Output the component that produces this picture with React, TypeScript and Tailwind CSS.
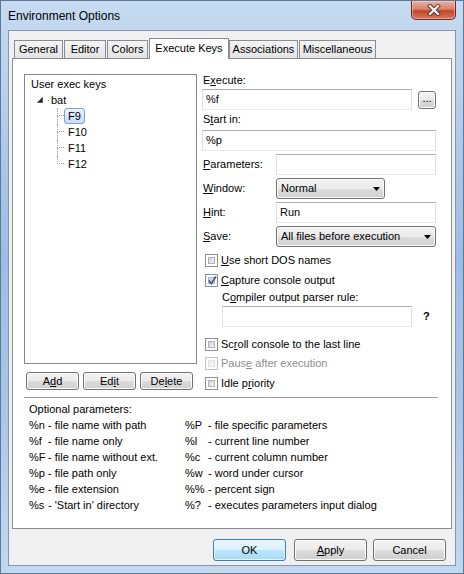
import React from 'react'

const btn =
  'flex items-center justify-center border border-[#707070] rounded-[3px] bg-[linear-gradient(#f2f2f2_0%,#ebebeb_50%,#dddddd_50%,#cfcfcf_100%)] shadow-[inset_0_0_0_1px_#fcfcfc] text-black'

const edit = 'h-[21px] border border-[#abadb3] border-b-[#e3e9ef] border-x-[#dbdfe6] bg-white px-[3px] flex items-center'

function U({ children }: { children: React.ReactNode }) {
  return <span className="underline underline-offset-[1px]">{children}</span>
}

function Check({
  checked,
  disabled,
  children,
}: {
  checked?: boolean
  disabled?: boolean
  children: React.ReactNode
}) {
  return (
    <div className={'flex items-center h-[13px] ml-[3px] ' + (disabled ? 'text-[#8d8d8d]' : 'text-black')}>
      <span
        className={
          'relative w-[13px] h-[13px] border p-[2px] flex bg-white ' +
          (disabled ? 'border-[#c4c4c4]' : 'border-[#8e8f8f]')
        }
      >
        <span
          className={
            'flex-1 border ' +
            (disabled
              ? 'bg-[#f4f4f4] border-[#e2e2e2]'
              : 'bg-[linear-gradient(135deg,#cbcfd5,#f6f6f6)] border-[#b0b4ba]')
          }
        />
        {checked && (
          <svg className="absolute left-[1px] top-[0px]" width="11" height="11" viewBox="0 0 11 11">
            <path d="M2 5.5 L4.3 8.5 L9 1.5" stroke="#3d5a98" strokeWidth="1.8" fill="none" />
          </svg>
        )}
      </span>
      <span className="ml-[3px] leading-[13px]">{children}</span>
    </div>
  )
}

function Arrow() {
  return (
    <svg width="7" height="4" viewBox="0 0 7 4">
      <polygon points="0,0 7,0 3.5,4" fill="#000" />
    </svg>
  )
}

function Connector({ last }: { last?: boolean }) {
  return (
    <span className="flex flex-col w-[7px] h-[16px]">
      <span className="h-[8px] border-l border-b border-dotted border-[#a0a0a0]" />
      {!last && <span className="h-[8px] border-l border-dotted border-[#a0a0a0]" />}
    </span>
  )
}

const leftParams = [
  ['%n', '- file name with path'],
  ['%f', '- file name only'],
  ['%F', '- file name without ext.'],
  ['%p', '- file path only'],
  ['%e', '- file extension'],
  ['%s', "- 'Start in' directory"],
]
const rightParams = [
  ['%P', '- file specific parameters'],
  ['%l', '- current line number'],
  ['%c', '- current column number'],
  ['%w', '- word under cursor'],
  ['%%', '- percent sign'],
  ['%?', '- executes parameters input dialog'],
]

const tabs = [
  { name: 'General', w: 'w-[49px]' },
  { name: 'Editor', w: 'w-[42px]' },
  { name: 'Colors', w: 'w-[41px]' },
  { name: 'Execute Keys', w: 'w-[80px]', active: true },
  { name: 'Associations', w: 'w-[69px]' },
  { name: 'Miscellaneous', w: 'w-[77px]' },
]

export default function App() {
  return (
    <div className="w-[464px] h-[574px] flex flex-col border border-[#5f7896] bg-[linear-gradient(180deg,#c6dbf1_0%,#b3cdea_20%,#9cbde3_45%,#a9c6e7_70%,#c3d8ef_100%)] font-['Liberation_Sans',Arial,sans-serif] text-[11px] text-black overflow-hidden">
      {/* title bar */}
      <div className="h-[29px] flex items-start justify-between pl-[7px]">
        <div className="pt-[8px] text-[12px] leading-[14px] text-black">Environment Options</div>
        <div className="mr-[7px] w-[45px] h-[19px] border border-t-0 border-[#6b2a20] rounded-b-[5px] bg-[linear-gradient(180deg,#eab0a2_0%,#d9806c_45%,#c4432d_55%,#d9785e_100%)] shadow-[inset_0_0_0_1px_rgba(255,255,255,0.35)] flex items-center justify-center">
          <svg width="14" height="12" viewBox="0 0 14 12">
            <path d="M3 2 L11 10 M11 2 L3 10" stroke="#4a3430" strokeWidth="4" strokeLinecap="square" />
            <path d="M3 2 L11 10 M11 2 L3 10" stroke="#ffffff" strokeWidth="2.2" strokeLinecap="square" />
          </svg>
        </div>
      </div>

      {/* client area */}
      <div className="mx-[7px] h-[536px] border border-[#8497b0] bg-[#f0f0f0] flex flex-col">
        <div className="pt-[7px] pl-[5px] h-[27px] flex items-end">
          {tabs.map((t) =>
            t.active ? (
              <div
                key={t.name}
                className={
                  t.w +
                  ' relative z-10 -mb-px h-[21px] border border-b-0 border-[#898c95] bg-white flex justify-center pt-[3px] leading-[13px]'
                }
              >
                {t.name}
              </div>
            ) : (
              <div
                key={t.name}
                className={
                  t.w +
                  ' h-[18px] mr-[1px] border border-b-0 border-[#898c95] bg-[linear-gradient(180deg,#f4f4f4,#e4e4e4)] flex items-center justify-center leading-[13px]'
                }
              >
                {t.name}
              </div>
            ),
          )}
        </div>

        {/* tab page */}
        <div className="ml-[3px] w-[440px] h-[471px] border border-[#898c95] bg-white flex flex-col">
          <div className="flex pt-[15px] pl-[11px]">
            {/* left column */}
            <div className="w-[173px] flex flex-col">
              <div className="h-[290px] border border-[#828790] bg-white pt-[1px] leading-[16px]">
                <div className="h-[16px] pl-[6px]">User exec keys</div>
                <div className="h-[16px] flex items-center pl-[12px]">
                  <svg width="6" height="6" viewBox="0 0 6 6">
                    <polygon points="5.5,0.5 5.5,5.5 0.5,5.5" fill="#262626" stroke="#555" strokeWidth="1" />
                  </svg>
                  <span className="ml-[5px] w-[1px] h-[1px] bg-[#777]" />
                  <span className="ml-[2px]">bat</span>
                </div>
                {['F9', 'F10', 'F11', 'F12'].map((k, i) => (
                  <div key={k} className="h-[16px] flex items-center pl-[32px]">
                    <Connector last={i === 3} />
                    {i === 0 ? (
                      <span className="h-[16px] px-[3px] border border-[#7da2ce] rounded-[3px] bg-[linear-gradient(180deg,#ebf4fd,#c6defc)] leading-[14px]">
                        {k}
                      </span>
                    ) : (
                      <span className="h-[16px] px-[3px] border border-transparent leading-[14px]">{k}</span>
                    )}
                  </div>
                ))}
              </div>
              <div className="mt-[8px] pl-[2px] flex gap-[4px]">
                <button className={btn + ' w-[53px] h-[18px]'}>
                  A<U>d</U>d
                </button>
                <button className={btn + ' w-[53px] h-[18px]'}>
                  Ed<U>i</U>t
                </button>
                <button className={btn + ' w-[53px] h-[18px]'}>
                  De<U>l</U>ete
                </button>
              </div>
            </div>

            {/* right column */}
            <div className="ml-[5px] w-[234px] flex flex-col">
              <div className="h-[13px] leading-[13px] pl-[1px]">
                E<U>x</U>ecute:
              </div>
              <div className="mt-[2px] flex items-center">
                <div className={edit + ' w-[210px]'}>%f</div>
                <button className={btn + ' ml-[6px] w-[18px] h-[18px] pb-[3px] leading-none'}>...</button>
              </div>
              <div className="mt-[3px] h-[13px] leading-[13px] pl-[1px]">
                S<U>t</U>art in:
              </div>
              <div className={edit + ' mt-[4px] w-full'}>%p</div>

              <div className="mt-[3px] h-[21px] flex items-center">
                <span className="w-[74px] pl-[1px]">
                  <U>P</U>arameters:
                </span>
                <div className={edit + ' w-[160px]'} />
              </div>
              <div className="mt-[3px] h-[21px] flex items-center">
                <span className="w-[74px] pl-[1px]">
                  <U>W</U>indow:
                </span>
                <div className={btn + ' w-[109px] h-[21px] !justify-between px-[4px]'}>
                  <span>Normal</span>
                  <Arrow />
                </div>
              </div>
              <div className="mt-[3px] h-[21px] flex items-center">
                <span className="w-[74px] pl-[1px]">
                  <U>H</U>int:
                </span>
                <div className={edit + ' w-[160px]'}>Run</div>
              </div>
              <div className="mt-[3px] h-[21px] flex items-center">
                <span className="w-[74px] pl-[1px]">
                  <U>S</U>ave:
                </span>
                <div className={btn + ' w-[160px] h-[21px] !justify-between px-[4px]'}>
                  <span>All files before execution</span>
                  <Arrow />
                </div>
              </div>

              <div className="mt-[7px]">
                <Check>
                  <U>U</U>se short DOS names
                </Check>
              </div>
              <div className="mt-[7px]">
                <Check checked>
                  <U>C</U>apture console output
                </Check>
              </div>
              <div className="mt-[4px] h-[13px] leading-[13px] pl-[20px]">
                C<U>o</U>mpiler output parser rule:
              </div>
              <div className="mt-[2px] pl-[20px] flex items-center">
                <div className={edit + ' w-[190px]'} />
                <span className="ml-[11px] font-bold">?</span>
              </div>
              <div className="mt-[11px]">
                <Check>
                  Sc<U>r</U>oll console to the last line
                </Check>
              </div>
              <div className="mt-[6px]">
                <Check disabled>
                  Paus<U>e</U> after execution
                </Check>
              </div>
              <div className="mt-[7px]">
                <Check>
                  Idle p<U>r</U>iority
                </Check>
              </div>
            </div>
          </div>

          <div className="mt-[7px] ml-[11px] w-[414px] border-t border-[#a0a0a0]" />

          <div className="mt-[3px] pl-[16px] leading-[16px]">
            <div>Optional parameters:</div>
            <div className="grid grid-cols-[156px_1fr]">
              {leftParams.map((l, i) => (
                <React.Fragment key={l[0]}>
                  <div className="flex">
                    <span className="w-[19px]">{l[0]}</span>
                    <span>{l[1]}</span>
                  </div>
                  <div className="flex">
                    <span className="w-[23px]">{rightParams[i][0]}</span>
                    <span>{rightParams[i][1]}</span>
                  </div>
                </React.Fragment>
              ))}
            </div>
          </div>
        </div>

        {/* dialog buttons */}
        <div className="mt-[10px] pr-[9px] flex justify-end">
          <button className="w-[73px] h-[22px] flex items-center justify-center border border-[#3c7fb1] rounded-[3px] bg-[linear-gradient(#eaf6fd_0%,#d9f0fc_50%,#bee6fd_50%,#a7d9f5_100%)] shadow-[inset_0_0_0_1px_#e6f4fc]">
            OK
          </button>
          <button className={btn + ' ml-[8px] w-[73px] h-[22px]'}>
            <U>A</U>pply
          </button>
          <button className={btn + ' ml-[6px] w-[73px] h-[22px]'}>Cancel</button>
        </div>
      </div>
    </div>
  )
}
